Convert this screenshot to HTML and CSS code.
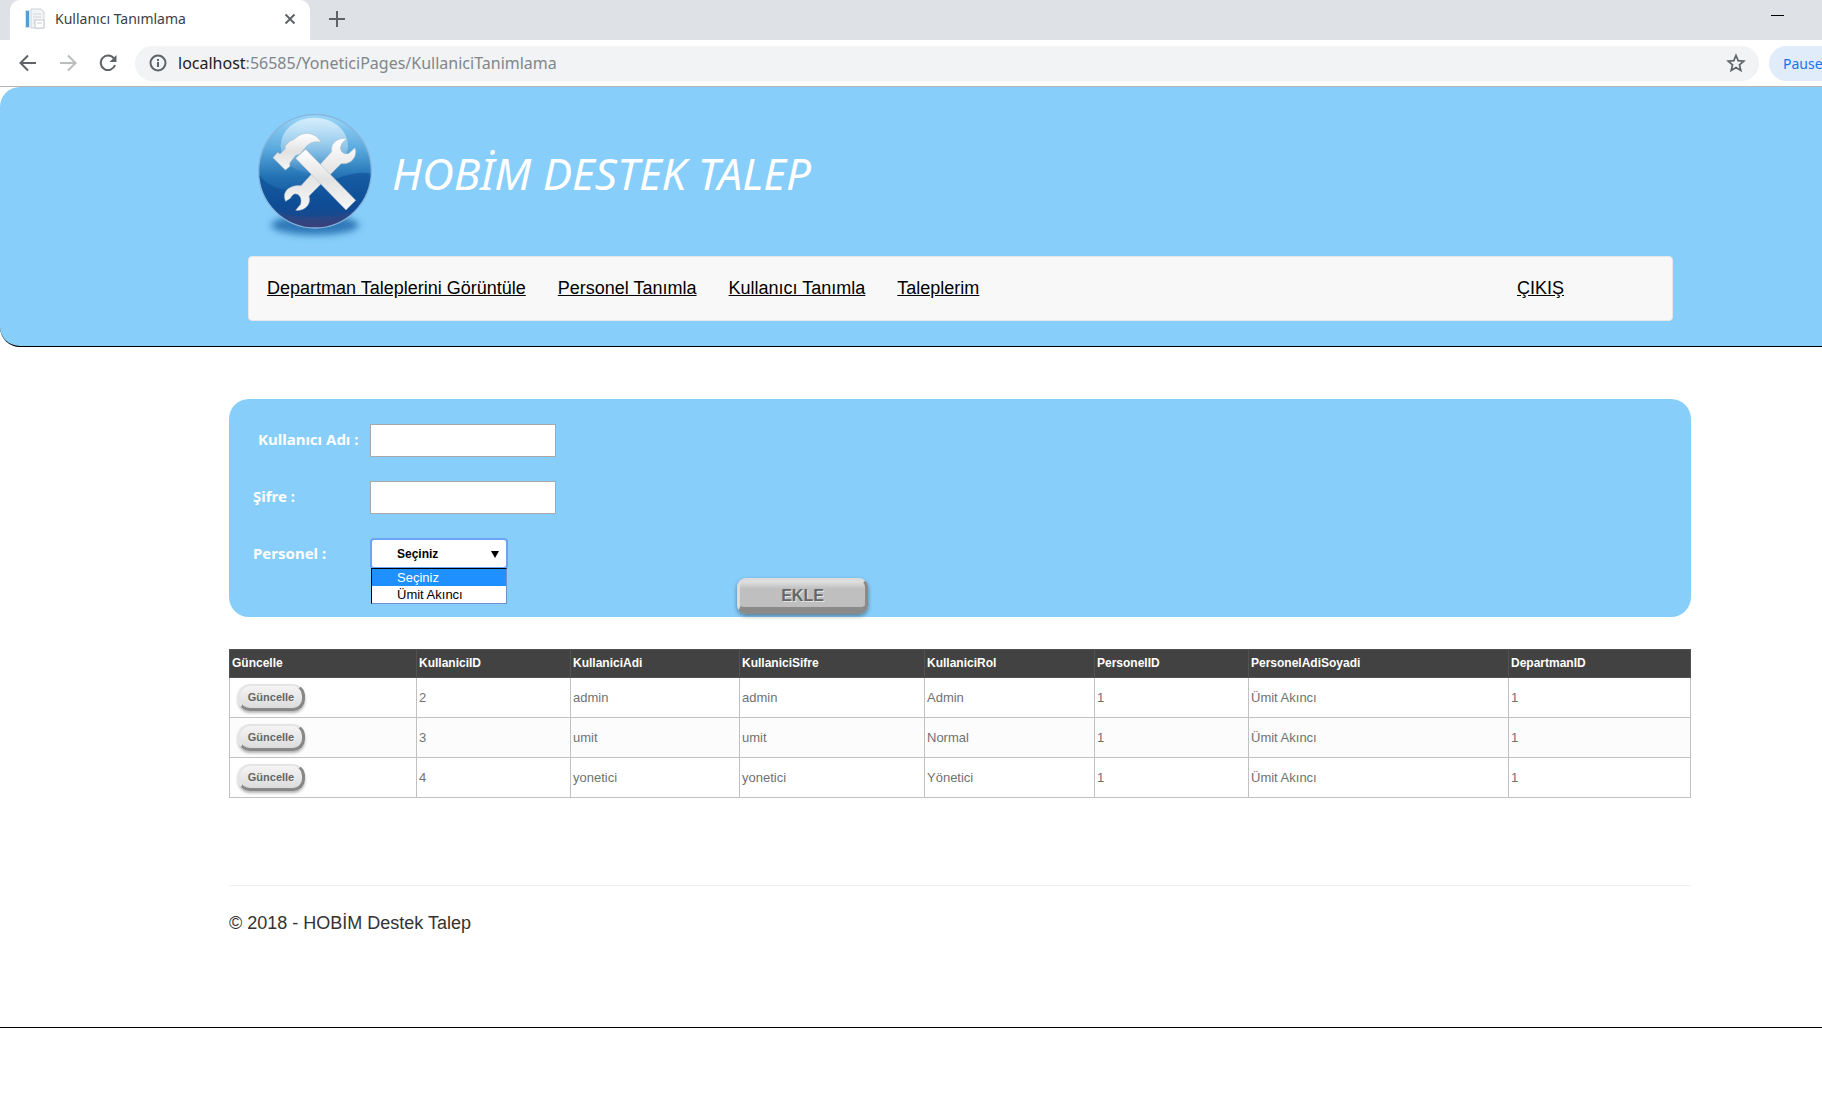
FILE: index.html
```html
<!DOCTYPE html>
<html lang="tr">
<head>
<meta charset="utf-8">
<title>Kullanıcı Tanımlama</title>
<link rel="stylesheet" href="styles.css">
</head>
<body>
<div class="browser">
  <div class="tab-strip">
    <div class="tab">
      <svg class="favicon" width="20" height="22" viewBox="0 0 20 22"><rect x="0" y="2" width="5" height="18" fill="#d5e6f2"/><rect x="1" y="3" width="3" height="16" fill="#4f9ed4"/><path d="M6 1h10l3 3v16H6z" fill="#f3f4f6" stroke="#ccd0d6"/><path d="M8 6h8M8 9h8M8 12h4M8 15h3" stroke="#cfd4dc"/><path d="M10 12h9v8h-9z" fill="#fff" stroke="#c4c8cf"/><path d="M12 15h5" stroke="#c4c8cf"/></svg>
      <span class="tab-title">Kullanıcı Tanımlama</span>
      <button class="icon-button" type="button" aria-label="Sekmeyi kapat"><svg width="12" height="12" viewBox="0 0 12 12"><path d="M1.500 1.500l9 9M10.500 1.500l-9 9" stroke="#5f6368" stroke-width="2"/></svg></button>
    </div>
    <button class="icon-button new-tab" type="button" aria-label="Yeni sekme"><svg width="16" height="16" viewBox="0 0 16 16"><path d="M8 0v16M0 8h16" stroke="#5f6368" stroke-width="2"/></svg></button>
    <button class="icon-button minimize" type="button" aria-label="Simge durumuna küçült"><svg width="13" height="16" viewBox="0 0 13 16"><path d="M0 8.500h13" stroke="#000"/></svg></button>
  </div>
  <div class="toolbar">
    <button class="icon-button" type="button" aria-label="Geri"><svg width="18" height="18" viewBox="0 0 18 18"><path d="M17 9H2M9 1.500L1.500 9 9 16.500" fill="none" stroke="#5f6368" stroke-width="2"/></svg></button>
    <button class="icon-button" type="button" aria-label="İleri"><svg width="18" height="18" viewBox="0 0 18 18"><path d="M1 9h15M9 1.500L16.500 9 9 16.500" fill="none" stroke="#babcbe" stroke-width="2"/></svg></button>
    <button class="icon-button" type="button" aria-label="Yenile"><svg width="18" height="18" viewBox="0 0 18 18"><path d="M15 4.500A7.300 7.300 0 1 0 16 11" fill="none" stroke="#5f6368" stroke-width="2"/><path d="M17.500 1v7h-7z" fill="#5f6368"/></svg></button>
    <div class="address">
      <svg width="18" height="18" viewBox="0 0 18 18"><circle cx="9" cy="9" r="7.500" fill="none" stroke="#5f6368" stroke-width="2"/><path d="M9 8v5M9 5v2" stroke="#5f6368" stroke-width="2"/></svg>
      <span class="url"><span class="host">localhost</span>:56585/YoneticiPages/KullaniciTanimlama</span>
      <button class="icon-button star" type="button" aria-label="Yer işareti ekle"><svg width="20" height="20" viewBox="0 0 20 20"><path d="M10 2.500l2.200 5.200 5.600.5-4.300 3.700 1.300 5.600-4.800-3-4.800 3 1.300-5.600L2.200 8.200l5.600-.5z" fill="none" stroke="#5f6368" stroke-width="1.700"/></svg></button>
    </div>
    <button class="paused" type="button">Paused</button>
  </div>
</div>

<header class="site-header">
  <div class="brand">
    <svg class="logo" width="118" height="136" viewBox="33 27 354 408">
      <defs>
        <linearGradient id="ball" x1="0" y1="0" x2="0" y2="1"><stop offset="0" stop-color="#9bd6f8"/><stop offset=".3" stop-color="#5aaade"/><stop offset=".55" stop-color="#2271b3"/><stop offset=".8" stop-color="#124f96"/><stop offset="1" stop-color="#3c3f78"/></linearGradient>
        <linearGradient id="shine" x1="0" y1="0" x2="0" y2="1"><stop offset="0" stop-color="#fff" stop-opacity=".6"/><stop offset="1" stop-color="#fff" stop-opacity=".05"/></linearGradient>
        <linearGradient id="metal" x1="0" y1="0" x2="0" y2="1"><stop offset="0" stop-color="#fff"/><stop offset=".5" stop-color="#e2e2e2"/><stop offset="1" stop-color="#f6f6f6"/></linearGradient>
        <filter id="soft" x="-30%" y="-60%" width="160%" height="220%"><feGaussianBlur stdDeviation="11"/></filter>
      </defs>
      <ellipse cx="210" cy="360" rx="132" ry="30" fill="#2f78b8" filter="url(#soft)"/>
      <ellipse cx="210" cy="199" rx="169" ry="170" fill="url(#ball)" stroke="#86b4dc" stroke-width="4"/>
      <path d="M43 210C80 262 160 268 225 240S340 196 377 206C374 250 352 292 322 320C250 340 130 345 84 308C60 280 46 250 43 210z" fill="#0b4a95" opacity=".55"/>
      <ellipse cx="208" cy="122" rx="101" ry="84" fill="url(#shine)"/>
      <g fill="url(#metal)" stroke="#a9bac9" stroke-width="1.500">
        <path d="M260 140C256 116 274 99 305 100L290 116Q283 130 290 140Q300 150 312 145L330 128C339 154 319 180 288 176L192 273C200 297 180 319 152 316L167 298Q172 276 158 268Q145 262 136 280L122 289C110 262 130 240 168 242z"/>
        <path d="M152 160L182 133L332 286L303 315z"/>
        <path d="M84 158L98 142L105 147L121 132L120 124L135 108L146 104L152 99C172 80 208 78 229 112C206 106 190 115 178 131L165 147L152 151L134 174L135 184L121 195z"/>
      </g>
    </svg>
    <h1 class="title">HOBİM DESTEK TALEP</h1>
  </div>
  <nav class="menu">
    <a href="#">Departman Taleplerini Görüntüle</a>
    <a href="#">Personel Tanımla</a>
    <a href="#">Kullanıcı Tanımla</a>
    <a href="#">Taleplerim</a>
    <a class="logout" href="#">ÇIKIŞ</a>
  </nav>
</header>

<main class="content">
  <form class="panel">
    <div class="field"><label class="indented" for="username">Kullanıcı Adı :</label><input id="username" type="text"></div>
    <div class="field"><label for="password">Şifre :</label><input id="password" type="text"></div>
    <div class="field">
      <label for="person">Personel :</label>
      <div class="select-box">
        <select id="person"><option>Seçiniz</option><option>Ümit Akıncı</option></select>
        <span class="arrow"></span>
        <ul class="options"><li class="active">Seçiniz</li><li>Ümit Akıncı</li></ul>
      </div>
    </div>
    <button class="add" type="button">EKLE</button>
  </form>

  <table class="users">
    <colgroup><col class="c-action"><col class="c-id"><col class="c-name"><col class="c-pass"><col class="c-role"><col class="c-id"><col class="c-person"><col class="c-dept"></colgroup>
    <thead>
      <tr><th>Güncelle</th><th>KullaniciID</th><th>KullaniciAdi</th><th>KullaniciSifre</th><th>KullaniciRol</th><th>PersonelID</th><th>PersonelAdiSoyadi</th><th>DepartmanID</th></tr>
    </thead>
    <tbody>
      <tr><td><button class="update" type="button">Güncelle</button></td><td>2</td><td>admin</td><td>admin</td><td>Admin</td><td>1</td><td>Ümit Akıncı</td><td>1</td></tr>
      <tr><td><button class="update" type="button">Güncelle</button></td><td>3</td><td>umit</td><td>umit</td><td>Normal</td><td>1</td><td>Ümit Akıncı</td><td>1</td></tr>
      <tr><td><button class="update" type="button">Güncelle</button></td><td>4</td><td>yonetici</td><td>yonetici</td><td>Yönetici</td><td>1</td><td>Ümit Akıncı</td><td>1</td></tr>
    </tbody>
  </table>

  <footer class="footer">© 2018 - HOBİM Destek Talep</footer>
</main>
<div class="page-end"></div>
</body>
</html>
```
FILE: styles.css
```css
* { box-sizing: border-box; }

body {
  margin: 0;
  background: #fff;
  color: #333;
  font-family: "Liberation Sans", Arial, sans-serif;
  font-size: 18px;
  overflow-x: hidden;
}

button, input, select { font-family: inherit; }

/* Browser window */
.browser {
  font-family: "Noto Sans", "Segoe UI", sans-serif;
  border-bottom: 1px solid #b4b4b4;
}
.tab-strip {
  display: flex;
  align-items: flex-start;
  height: 40px;
  padding-left: 10px;
  background: #dee1e6;
}
.tab {
  display: flex;
  align-items: center;
  width: 300px;
  height: 40px;
  padding: 0 14px 2px 15px;
  background: #fff;
  border-radius: 10px 10px 0 0;
}
.tab-title {
  flex: 1;
  margin-left: 10px;
  padding-bottom: 2px;
  color: #3c4043;
  font-size: 14px;
}
.icon-button {
  display: flex;
  padding: 0;
  border: 0;
  background: none;
}
.new-tab { margin: 11px 0 0 19px; }
.minimize { margin: 7px 38px 0 auto; }
.toolbar {
  display: flex;
  align-items: center;
  height: 46px;
  padding-left: 19px;
  gap: 22px;
  overflow: hidden;
}
.address {
  display: flex;
  flex: 1;
  align-items: center;
  height: 35px;
  margin-right: -12px;
  margin-left: -4px;
  padding: 0 13px 0 14px;
  border-radius: 18px;
  background: #f1f3f4;
}
.url {
  flex: 1;
  margin-left: 11px;
  color: #80868b;
  font-size: 16px;
}
.host { color: #202124; }
.paused {
  width: 53px;
  height: 35px;
  padding: 0 0 0 14px;
  overflow: hidden;
  border: 0;
  border-radius: 18px 0 0 18px;
  background: #e1ecfb;
  color: #1a73e8;
  font-size: 14px;
  text-align: left;
}

/* Site header */
.site-header {
  padding: 24px 149px 25px 248px;
  border-bottom: 1px solid #000;
  border-radius: 20px 0 0 20px;
  background: #87cefa;
}
.brand {
  display: flex;
  align-items: flex-start;
  height: 145px;
  padding: 3px 0 0 8px;
}
.title {
  margin: 29px 0 0 18px;
  color: #fff;
  font: italic 400 44px/60px "Noto Sans", "Segoe UI", sans-serif;
}
.menu {
  display: flex;
  align-items: center;
  gap: 32px;
  height: 65px;
  padding: 0 108px 1px 18px;
  border: 1px solid #e7e7e7;
  border-radius: 4px;
  background: #f8f8f8;
}
.menu a { color: #000; }
.menu .logout { margin-left: auto; }

/* Page content */
.content { padding: 52px 131px 0 229px; }

.panel {
  position: relative;
  display: flex;
  flex-direction: column;
  gap: 24px;
  height: 218px;
  padding: 25px 24px;
  border-radius: 20px;
  background: #87cefa;
}
.field {
  display: flex;
  align-items: flex-start;
  height: 33px;
}
.field label {
  width: 117px;
  color: #fff;
  font: 700 15px/30px "Noto Sans", "Segoe UI", sans-serif;
  white-space: nowrap;
}
.field .indented { padding-left: 5px; }
.field input {
  width: 186px;
  height: 33px;
  border: 1px solid #a9a9a9;
}
.select-box { position: relative; width: 138px; }
.select-box select {
  display: block;
  width: 138px;
  height: 31px;
  padding: 0 25px;
  appearance: none;
  border: 2px solid #6ba3f5;
  border-radius: 4px;
  background: #fff;
  color: #000;
  font-size: 12px;
  font-weight: 700;
}
.arrow {
  position: absolute;
  top: 13px;
  right: 9px;
  border: 4px solid transparent;
  border-top: 7px solid #000;
  border-bottom: 0;
}
.options {
  position: absolute;
  top: 30px;
  left: 1px;
  width: 136px;
  margin: 0;
  padding: 0;
  border: 1px solid #6d8fce;
  border-top-color: #000;
  border-left-color: #000;
  background: #fff;
  color: #000;
  font-size: 13px;
  line-height: 17px;
  list-style: none;
}
.options li { padding-left: 25px; }
.options .active { background: #1e90ff; color: #fff; }

.add {
  position: absolute;
  top: 179px;
  left: 508px;
  width: 131px;
  height: 36px;
  padding: 4px 0 0;
  border: 3px solid #dcdcdc;
  border-right-color: #8a8a8a;
  border-bottom: 7px solid #8a8a8a;
  border-radius: 9px;
  background: linear-gradient(#e2e2e2, #bfbfbf 30%);
  box-shadow: 0 2px 4px rgba(0, 0, 0, .4);
  color: #666;
  font-size: 16px;
  font-weight: 700;
  text-shadow: 1px 1px #e5e5e5;
}

.users {
  width: 100%;
  margin-top: 32px;
  border-collapse: collapse;
  table-layout: fixed;
  color: #717171;
  font-size: 13px;
}
.c-action { width: 187px; }
.c-id { width: 154px; }
.c-name { width: 169px; }
.c-pass { width: 185px; }
.c-role { width: 170px; }
.c-person { width: 260px; }
.c-dept { width: 182px; }
.users th {
  height: 28px;
  padding: 0 2px 2px;
  border: 1px solid #525252;
  background: #424242;
  color: #fff;
  font-size: 12px;
  text-align: left;
}
.users td {
  height: 40px;
  padding: 0 2px;
  border: 1px solid #c1c1c1;
}
.users tbody tr:nth-child(even) { background: #fcfcfc; }
.update {
  display: block;
  width: 67px;
  height: 27px;
  margin-left: 6px;
  padding: 0;
  border: 2px solid #e4e4e4;
  border-right: 3px solid #888;
  border-bottom: 3px solid #888;
  border-radius: 12px;
  background: linear-gradient(#f4f4f4, #dcdcdc);
  box-shadow: 0 2px 3px rgba(0, 0, 0, .3);
  color: #666;
  font-size: 11px;
  font-weight: 700;
}

.footer {
  margin-top: 87px;
  padding-top: 27px;
  border-top: 1px solid #eee;
  line-height: 20px;
}
.page-end { margin-top: 94px; border-top: 1px solid #000; }
```
